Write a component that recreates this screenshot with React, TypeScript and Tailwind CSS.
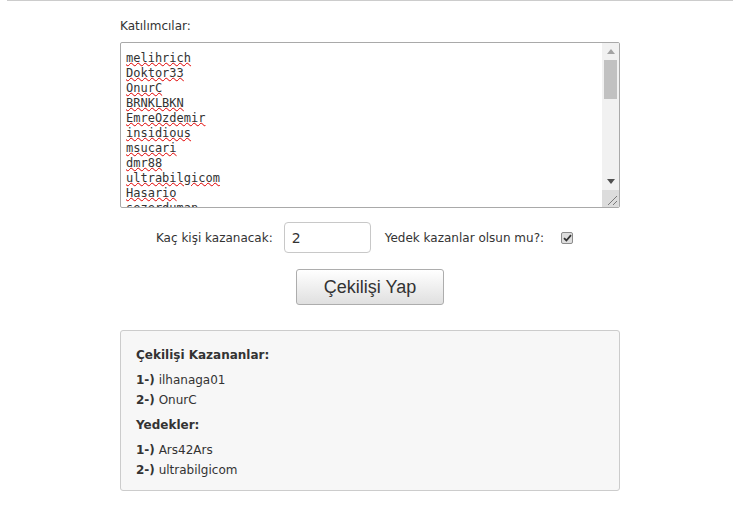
import React from "react";

const names = [
  "melihrich",
  "Doktor33",
  "OnurC",
  "BRNKLBKN",
  "EmreOzdemir",
  "insidious",
  "msucari",
  "dmr88",
  "ultrabilgicom",
  "Hasario",
  "sezerduman",
];

function FakeScrollbar() {
  return (
    <div className="flex w-[17px] flex-col bg-[#f1f1f1]">
      <div className="flex h-[17px] items-center justify-center">
        <svg width="8" height="5" viewBox="0 0 8 5">
          <path d="M0 5 L4 0 L8 5 Z" fill="#a3a3a3" />
        </svg>
      </div>
      <div className="mx-[2px] h-[39px] bg-[#c1c1c1]" />
      <div className="flex-1" />
      <div className="flex h-[17px] items-center justify-center">
        <svg width="8" height="5" viewBox="0 0 8 5">
          <path d="M0 0 L8 0 L4 5 Z" fill="#505050" />
        </svg>
      </div>
      <div className="relative h-[17px] bg-[#dcdcdc]">
        <svg className="absolute bottom-[1px] right-[1px]" width="12" height="12" viewBox="0 0 12 12">
          <path d="M11 2 L2 11 M11 7 L7 11" stroke="#7a7a7a" strokeWidth="1" />
        </svg>
      </div>
    </div>
  );
}

function Row({ n, name }: { n: number; name: string }) {
  return (
    <div className="leading-[20px]">
      <span className="font-bold">{n}-)</span> {name}
    </div>
  );
}

export default function App() {
  return (
    <div className="min-h-[516px] bg-white text-[#333]" style={{ fontFamily: "Tahoma, 'DejaVu Sans', sans-serif" }}>
      <div className="mx-[7px] h-px bg-[#cccccc]" />
      <div className="mx-auto flex w-[500px] flex-col pt-[15px] text-[12px]">
        <label className="leading-[20px]">Katılımcılar:</label>
        <div className="mt-[6px] flex h-[166px] overflow-hidden rounded-[2px] border border-[#a9a9a9]">
          <div
            className="flex-1 overflow-hidden pl-[5px] pt-[8px] text-[12px] leading-[15px] text-[#333]"
            style={{ fontFamily: "'DejaVu Sans Mono', monospace" }}
          >
            {names.map((n) => (
              <div key={n}>
                <span className="underline decoration-[#e00000] decoration-wavy decoration-[0.5px] underline-offset-0">
                  {n}
                </span>
              </div>
            ))}
          </div>
          <FakeScrollbar />
        </div>

        <div className="mt-[14px] flex items-center justify-center">
          <span className="mr-[11px]">Kaç kişi kazanacak:</span>
          <input
            className="h-[31px] w-[87px] rounded-[4px] border border-[#c8c8c8] px-[7px] text-[14px] text-[#333] outline-none"
            defaultValue="2"
          />
          <span className="ml-[14px] mr-[17px]">Yedek kazanlar olsun mu?:</span>
          <span className="mr-[11px] flex h-[12px] w-[12px] items-center justify-center rounded-[2px] border border-[#8c8c8c] bg-[#dedede]">
            <svg width="9" height="8" viewBox="0 0 9 8">
              <path d="M1 4.2 L3.4 6.5 L8 1.2" stroke="#333" strokeWidth="1.8" fill="none" />
            </svg>
          </span>
        </div>

        <div className="mt-[16px] flex justify-center">
          <button
            className="h-[36px] w-[148px] rounded-[3px] border border-[#adadad] bg-gradient-to-b from-[#ffffff] to-[#e0e0e0] text-[18px] text-[#333]"
            style={{ fontFamily: "'Liberation Sans', Arial, sans-serif" }}
          >
            Çekilişi Yap
          </button>
        </div>

        <div className="mt-[25px] rounded-[3px] border border-[#cccccc] bg-[#f7f7f7] px-[15px] pb-[10px] pt-[14px]">
          <div className="font-bold leading-[20px]">Çekilişi Kazananlar:</div>
          <div className="mt-[5px]">
            <Row n={1} name="ilhanaga01" />
            <Row n={2} name="OnurC" />
          </div>
          <div className="mt-[5px] font-bold leading-[20px]">Yedekler:</div>
          <div className="mt-[5px]">
            <Row n={1} name="Ars42Ars" />
            <Row n={2} name="ultrabilgicom" />
          </div>
        </div>
      </div>
    </div>
  );
}
